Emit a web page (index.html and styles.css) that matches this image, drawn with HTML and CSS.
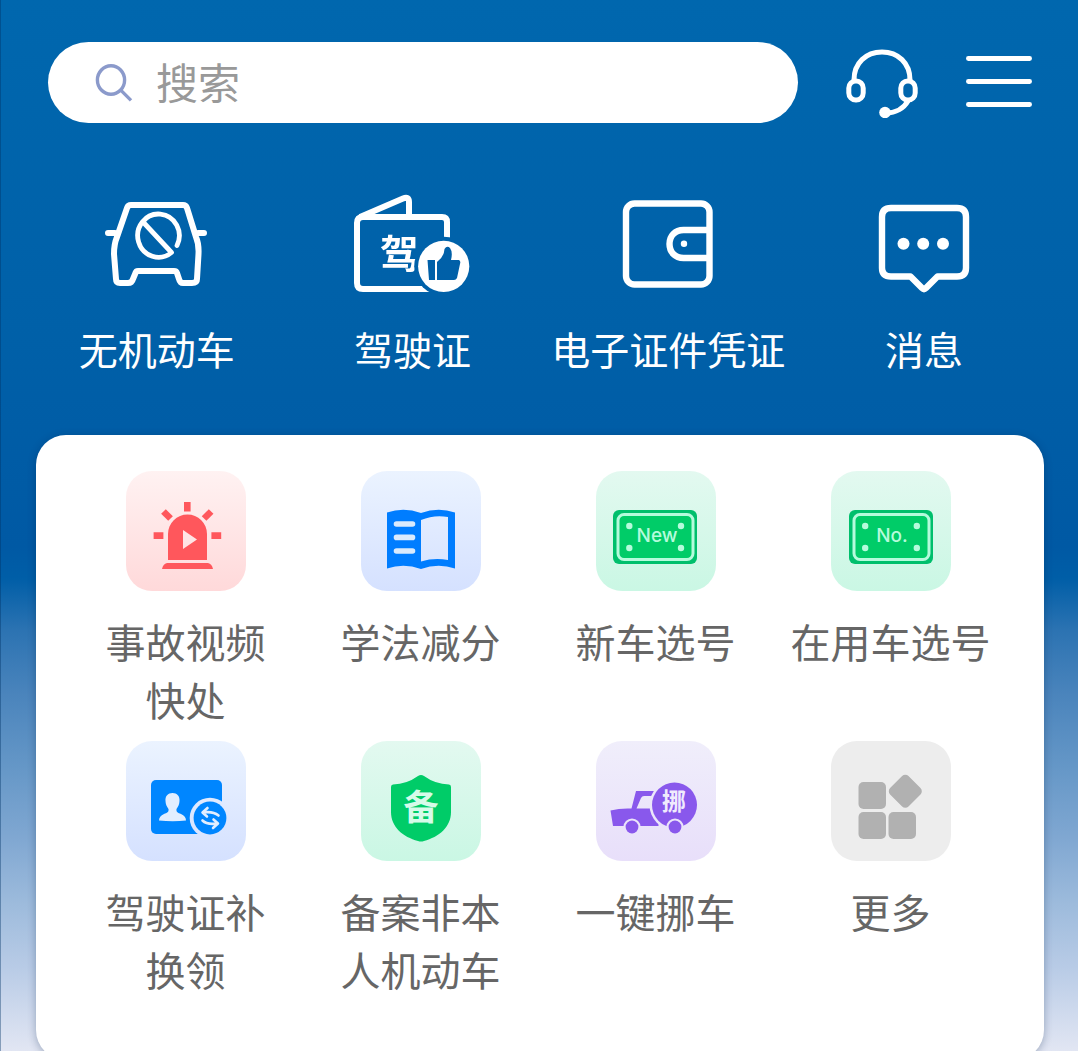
FILE: index.html
```html
<!DOCTYPE html>
<html lang="zh-CN">
<head>
<meta charset="utf-8">
<meta name="viewport" content="width=device-width, initial-scale=1">
<title>首页</title>
<link rel="stylesheet" href="styles.css">
</head>
<body>
<div class="app">
  <header class="topbar">
    <form class="search" role="search">
      <label class="search-label" for="q" aria-label="搜索">
        <svg class="search-icon" viewBox="0 0 40 40" fill="none" stroke="#8b9acb" stroke-width="3.4" aria-hidden="true">
          <ellipse cx="16" cy="18" rx="13.6" ry="14.2"/>
          <path d="M26 28.4 36 38.4"/>
        </svg>
      </label>
      <input class="search-input" id="q" type="text" placeholder="搜索">
    </form>
    <button class="icon-button" type="button" aria-label="客服">
      <svg class="headset-icon" viewBox="0 -1 74 70" fill="none" stroke="#fff" stroke-width="5" aria-hidden="true">
        <path d="M9 31C9 14 21 3 37 3s28 11 28 28"/>
        <rect x="3.8" y="32" width="14.4" height="19" rx="7"/>
        <rect x="55.8" y="32" width="14.4" height="19" rx="7"/>
        <path d="M63 52C59 59 51 64 41 64"/>
        <circle cx="40" cy="63.5" r="5.8" fill="#fff" stroke="none"/>
      </svg>
    </button>
    <button class="icon-button" type="button" aria-label="菜单">
      <svg class="menu-icon" viewBox="0 -1 66 70" fill="none" stroke="#fff" stroke-width="4.8" stroke-linecap="round" aria-hidden="true">
        <path d="M2.4 9.5H63.6M2.4 32.5H63.6M2.4 55.5H63.6"/>
      </svg>
    </button>
  </header>

  <nav class="services" aria-label="常用">
    <a class="service" href="#car">
      <svg class="service-icon" viewBox="1 0 120 104" fill="none" stroke="#fff" stroke-width="6" stroke-linecap="round" stroke-linejoin="round" aria-hidden="true">
        <path d="M35 13H87Q90 13 91 16L100 45Q103 52 102.500 62L101 87Q101 91 96 91H87Q84 91 83 87L81 81Q80.500 79 78 79H42Q40 79 39.500 81L37 87Q36 91 32 91H24Q20 91 20 87L18 62Q18 52 21 45L31 16Q32 13 35 13Z"/>
        <path d="M12 41H19M102 41H108"/>
        <path d="M81 53.500A20.800 21.600 0 1 0 75.500 60.500L48 31" stroke-width="4.800"/>
      </svg>
      <span class="service-label">无机动车</span>
    </a>
    <a class="service" href="#license">
      <svg class="service-icon" viewBox="1 0 120 104" fill="none" aria-hidden="true">
        <mask id="badge-gap">
          <rect width="120" height="104" fill="#fff"/>
          <circle cx="91.700" cy="74.300" r="29.500" fill="#000"/>
        </mask>
        <g mask="url(#badge-gap)">
          <path d="M95 50V30Q95 25 90 25H11Q5 25 5 31V91Q5 97 11 97H84M8 25 51 6.500Q57 4 57 10V25" stroke="#fff" stroke-width="6"/>
          <text class="license-char" x="47.500" y="76">驾</text>
        </g>
        <circle cx="91.700" cy="74.300" r="25.600" fill="#fff"/>
        <path d="M75.500 68H83V88H77ZM85 88V70Q92 65 92.500 57Q95 53 98 56Q101 60 99 68H107Q109 69 108 72L105 86Q104 88 102 88Z" fill="#0060a8"/>
      </svg>
      <span class="service-label">驾驶证</span>
    </a>
    <a class="service" href="#wallet">
      <svg class="service-icon" viewBox="0 0 120 104" fill="none" stroke="#fff" stroke-width="6.400" aria-hidden="true">
        <rect x="18" y="11.500" width="83.500" height="81" rx="8.500"/>
        <path d="M101 38H75.500C67 38 61.500 44 61.500 52S67 66 75.500 66H101"/>
        <circle cx="76" cy="51.700" r="3.200" fill="#fff" stroke="none"/>
      </svg>
      <span class="service-label">电子证件凭证</span>
    </a>
    <a class="service" href="#messages">
      <svg class="service-icon" viewBox="0 0 120 104" fill="none" stroke="#fff" stroke-width="6.400" stroke-linejoin="round" aria-hidden="true">
        <path d="M27 16H93Q102 16 102 25V76Q102 84.500 93 84.500H73.500L62 96Q60 98 58 96L46.500 84.500H27Q18 84.500 18 76V25Q18 16 27 16Z"/>
        <g fill="#fff" stroke="none"><circle cx="39.500" cy="51.700" r="6"/><circle cx="59.200" cy="51.700" r="6"/><circle cx="79" cy="51.700" r="6"/></g>
      </svg>
      <span class="service-label">消息</span>
    </a>
  </nav>

  <main class="card">
    <a class="tile" href="#accident">
      <svg class="tile-icon tile-red" viewBox="0 0 120 120" fill="#ff575c" aria-hidden="true">
        <path d="M42 89V63a19.500 19.500 0 0 1 39 0V89ZM57 59V78L71 68.500Z" fill-rule="evenodd"/>
        <path d="M41 92H82Q86 93 87 98H36Q37 93 41 92Z"/>
        <path d="M58 31h6.600v9.600H58zM27.600 61.300h9.800v6.600h-9.800zM85.400 61.300h9.800v6.600h-9.800z"/>
        <rect x="-5" y="-3.300" width="10" height="6.600" transform="translate(41 44) rotate(45)"/>
        <rect x="-5" y="-3.300" width="10" height="6.600" transform="translate(81.600 44) rotate(-45)"/>
      </svg>
      <span class="tile-label">事故视频<br>快处</span>
    </a>
    <a class="tile" href="#study">
      <svg class="tile-icon tile-blue" viewBox="0 0 120 120" fill="#007dff" aria-hidden="true">
        <path d="M26 41.500Q43 36 60 42Q77 36 94 41.500V97.500Q77 92 60 98Q43 92 26 97.500ZM60 49V90.500Q73 86.500 87 89V46Q73 43.500 60 49Z" fill-rule="evenodd"/>
        <path d="M35.500 53H51.500M35.500 66.400H51.500M35.500 80H51.500" stroke="#d9eafd" stroke-width="5.600" stroke-linecap="round"/>
      </svg>
      <span class="tile-label">学法减分</span>
    </a>
    <a class="tile" href="#new-plate">
      <svg class="tile-icon tile-green" viewBox="0 0 120 120" aria-hidden="true">
        <rect x="17" y="39" width="84" height="54" rx="6" fill="#00bf6c"/>
        <rect x="22" y="43.500" width="75" height="45" rx="6" fill="#00cc68" stroke="#b5fbdc" stroke-width="3"/>
        <g fill="#b5fbdc"><circle cx="33.300" cy="55" r="3.200"/><circle cx="85" cy="55" r="3.200"/><circle cx="33.300" cy="77" r="3.200"/><circle cx="85" cy="77" r="3.200"/></g>
        <text class="plate-text" x="61" y="71">New</text>
      </svg>
      <span class="tile-label">新车选号</span>
    </a>
    <a class="tile" href="#used-plate">
      <svg class="tile-icon tile-green" viewBox="0 0 120 120" aria-hidden="true">
        <rect x="18" y="39" width="84" height="54" rx="6" fill="#00bf6c"/>
        <rect x="23" y="43.500" width="75" height="45" rx="6" fill="#00cc68" stroke="#b5fbdc" stroke-width="3"/>
        <g fill="#b5fbdc"><circle cx="34.200" cy="55" r="3.200"/><circle cx="85.800" cy="55" r="3.200"/><circle cx="34.200" cy="77" r="3.200"/><circle cx="85.800" cy="77" r="3.200"/></g>
        <text class="plate-text" x="61" y="71">No.</text>
      </svg>
      <span class="tile-label">在用车选号</span>
    </a>
    <a class="tile" href="#renew">
      <svg class="tile-icon tile-blue" viewBox="0 0 120 120" fill="#0086ff" aria-hidden="true">
        <mask id="swap-gap">
          <rect width="120" height="120" fill="#fff"/>
          <circle cx="84" cy="77" r="20.300" fill="#000"/>
        </mask>
        <rect x="25" y="39" width="71" height="54" rx="5" mask="url(#swap-gap)"/>
        <path d="M46.500 52C51 52 54 55 53.500 60C53.500 63 52 66 50.500 68C50 71 52 72 55 73Q60 75 60 79.500Q47 81 33 79.500Q33 75 38 73C41 72 43 71 42.500 68C41 66 39.500 63 39.500 60C39 55 42 52 46.500 52Z" fill="#e2eeff"/>
        <circle cx="84" cy="77" r="16.400"/>
        <path d="M81.500 67 76.500 71.500 81 75.500M77 71.500Q87 70 92.500 74.500M87 87 92 82.500 87.500 78.500M91 82.500Q81 84 76.500 79.500" fill="none" stroke="#e2eeff" stroke-width="2.600" stroke-linecap="round" stroke-linejoin="round"/>
      </svg>
      <span class="tile-label">驾驶证补<br>换领</span>
    </a>
    <a class="tile" href="#register">
      <svg class="tile-icon tile-green" viewBox="0 0 120 120" aria-hidden="true">
        <path d="M57 35Q60 33 63 35Q74 43 88 43.500Q90 43.500 90 46V71C90 86 78 96 63 100Q60 101 57 100C42 96 30 86 30 71V46Q30 43.500 32 43.500Q46 43 57 35Z" fill="#00cc68"/>
        <text class="shield-char" x="60" y="79">备</text>
      </svg>
      <span class="tile-label">备案非本<br>人机动车</span>
    </a>
    <a class="tile" href="#move-car">
      <svg class="tile-icon tile-purple" viewBox="0 0 120 120" fill="#8958ec" aria-hidden="true">
        <mask id="truck-gap">
          <rect width="120" height="120" fill="#fff"/>
          <circle cx="78.500" cy="64" r="25" fill="#000"/>
          <circle cx="36" cy="86" r="8.600" fill="#000"/>
        </mask>
        <mask id="wheel-gap">
          <rect width="120" height="120" fill="#fff"/>
          <circle cx="79" cy="86" r="8.600" fill="#000"/>
        </mask>
        <path d="M14.500 69.500Q24 67 35.500 67.500L40 50H60V55H48Q46 55 45 57L40.500 67.500H56L62.500 81V85H17Z" mask="url(#truck-gap)"/>
        <circle cx="78.500" cy="64" r="22.500" mask="url(#wheel-gap)"/>
        <circle cx="36" cy="86" r="6.400"/>
        <circle cx="79" cy="86" r="6.400"/>
        <text class="truck-char" x="78" y="69">挪</text>
      </svg>
      <span class="tile-label">一键挪车</span>
    </a>
    <a class="tile" href="#more">
      <svg class="tile-icon tile-gray" viewBox="0 0 120 120" fill="#b1b1b1" aria-hidden="true">
        <rect x="27.500" y="41" width="27.500" height="27" rx="5"/>
        <rect x="27.500" y="71" width="27.500" height="27" rx="5"/>
        <rect x="57.500" y="71" width="27.500" height="27" rx="5"/>
        <rect x="-13" y="-13" width="26" height="26" rx="4.500" transform="translate(74.300 50.300) rotate(45)"/>
      </svg>
      <span class="tile-label">更多</span>
    </a>
  </main>
</div>
</body>
</html>
```
FILE: styles.css
```css
* {
  box-sizing: border-box;
}

html,
body {
  height: 100%;
  margin: 0;
}

body {
  font-family: "Noto Sans CJK SC", sans-serif;
  overflow: hidden;
}

a {
  color: inherit;
  text-decoration: none;
}

/* Scrolling screen of the app; its scrollbar stays hidden. */
.app {
  height: 100%;
  overflow-y: auto;
  scrollbar-width: none;
  padding-top: 42px;
  border-left: 1px solid rgba(0, 50, 100, 0.4);
  background: linear-gradient(
    #0067ae 0%,
    #0060a8 32%,
    #0059a4 52%,
    #005ea7 55%,
    #2c73b2 60%,
    #4a84bc 66%,
    #6597c7 73%,
    #81a8d2 80%,
    #9dbbdc 86%,
    #b8cbe6 92%,
    #e2e6f3 100%
  );
}

.topbar {
  display: flex;
  align-items: center;
  gap: 47px;
  padding: 0 46px 0 47px;
}

.search {
  flex: 1;
  min-width: 0;
  height: 81px;
  display: flex;
  align-items: center;
  gap: 21px;
  padding: 0 47px 2px;
  border-radius: 41px;
  background: #fff;
}

.search-label,
.search-icon {
  display: block;
  flex: none;
}

.search-icon {
  width: 40px;
  height: 40px;
}

.search-input {
  flex: 1;
  min-width: 0;
  padding: 0 0 2px;
  border: 0;
  outline: 0;
  background: none;
  color: #333;
  font: inherit;
  font-size: 42px;
  line-height: 58px;
}

.search-input::placeholder {
  color: #999;
  opacity: 1;
}

.icon-button {
  flex: none;
  padding: 0;
  border: 0;
  background: none;
  cursor: pointer;
}

.headset-icon,
.menu-icon {
  display: block;
  height: 70px;
}

.headset-icon {
  width: 74px;
}

.menu-icon {
  width: 66px;
}

.services {
  display: grid;
  grid-template-columns: repeat(4, 1fr);
  padding: 69px 26px 0 28px;
  color: #fff;
}

.service {
  display: flex;
  flex-direction: column;
  align-items: center;
  gap: 23px;
}

.service-icon {
  width: 120px;
  height: 104px;
}

.service-label {
  font-size: 39px;
  line-height: 58px;
  white-space: nowrap;
}

.card {
  display: grid;
  grid-template-columns: repeat(4, 1fr);
  row-gap: 13px;
  margin: 58px 34px 0 35px;
  padding: 36px 36px 62px 32px;
  border-radius: 30px;
  background: #fff;
  box-shadow: 0 2px 8px rgba(0, 30, 70, 0.3);
  color: #666;
}

.tile {
  display: flex;
  flex-direction: column;
  align-items: center;
  gap: 21px;
}

.tile-icon {
  width: 120px;
  height: 120px;
  border-radius: 26px;
}

.tile-label {
  font-size: 40px;
  line-height: 58px;
  text-align: center;
  white-space: nowrap;
}

.tile-red {
  background: linear-gradient(#fff2f2, #ffd9da);
}

.tile-blue {
  background: linear-gradient(#ebf3ff, #d5e1ff);
}

.tile-green {
  background: linear-gradient(#e3f9f0, #caf7e4);
}

.tile-purple {
  background: linear-gradient(#f0eefb, #e8dffa);
}

.tile-gray {
  background: #ededed;
}

.license-char,
.plate-text,
.shield-char,
.truck-char {
  text-anchor: middle;
}

.license-char {
  fill: #fff;
  font-size: 39px;
  font-weight: 700;
}

.plate-text {
  fill: #b5fbdc;
  font-family: Inter, "Liberation Sans", sans-serif;
  font-size: 19px;
  font-weight: 500;
}

.shield-char {
  fill: #d6fbe9;
  font-size: 35px;
  font-weight: 700;
}

.truck-char {
  fill: #f0ebfd;
  font-size: 24px;
  font-weight: 700;
}
```
